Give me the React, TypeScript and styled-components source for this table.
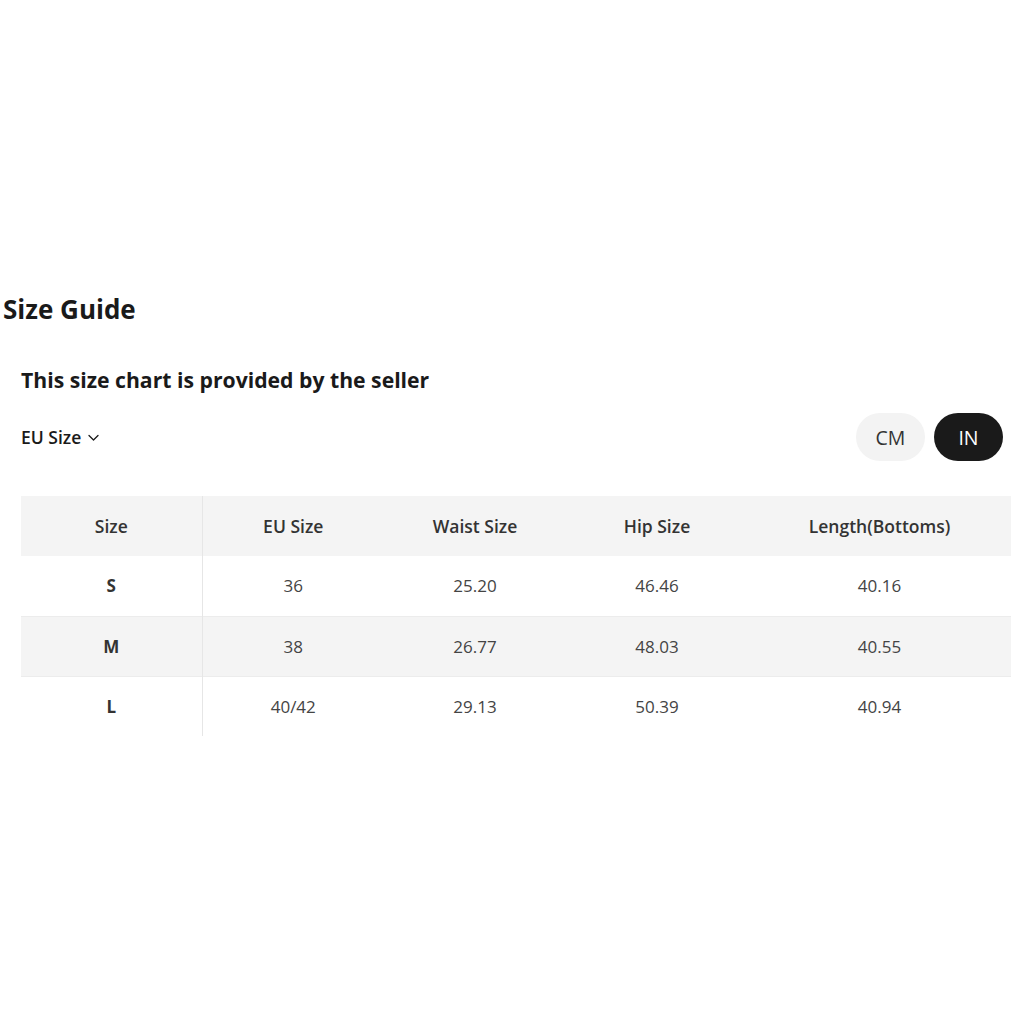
import styled, { createGlobalStyle } from "styled-components";

const GlobalStyle = createGlobalStyle`
  html, body {
    margin: 0;
    padding: 0;
    background: #ffffff;
    font-family: "Open Sans", "Noto Sans", sans-serif;
    color: #222;
  }
`;

const Page = styled.main`
  width: 1025px;
  height: 1025px;
  box-sizing: border-box;
  padding: 291px 14px 0 3px;
`;

const Title = styled.h1`
  margin: 0;
  font-size: 26px;
  line-height: 36px;
  font-weight: 700;
  color: #1a1a1a;
`;

const Body = styled.section`
  padding: 38px 0 0 18px;
`;

const Subtitle = styled.h2`
  margin: 0;
  font-size: 21.2px;
  line-height: 29px;
  font-weight: 700;
  color: #1a1a1a;
`;

const Toolbar = styled.div`
  display: flex;
  align-items: center;
  justify-content: space-between;
  margin-top: 19px;
  padding-right: 8px;
`;

const Dropdown = styled.button`
  display: flex;
  align-items: center;
  gap: 6px;
  border: none;
  background: none;
  padding: 0;
  font-family: inherit;
  font-size: 17.5px;
  font-weight: 600;
  color: #1a1a1a;
  cursor: pointer;
`;

const Units = styled.div`
  display: flex;
  gap: 9px;
`;

const Unit = styled.button<{ $active?: boolean }>`
  width: 69px;
  height: 48px;
  border: none;
  border-radius: 24px;
  font-family: inherit;
  font-size: 19.5px;
  font-weight: 400;
  background: ${(p) => (p.$active ? "#1a1a1a" : "#f3f3f3")};
  color: ${(p) => (p.$active ? "#ffffff" : "#333333")};
  cursor: pointer;
`;

const Table = styled.table`
  margin-top: 35px;
  width: 990px;
  border-collapse: collapse;
  table-layout: fixed;
  font-size: 17px;
`;

const Row = styled.tr<{ $shaded?: boolean }>`
  height: 60px;
  background: ${(p) => (p.$shaded ? "#f4f4f4" : "#ffffff")};
  border-bottom: 1px solid #ececec;
  &:last-child {
    border-bottom: none;
  }
`;

const HeadCell = styled.th<{ $first?: boolean }>`
  padding: 0;
  text-align: center;
  font-size: 17.5px;
  font-weight: 600;
  color: #333;
  border-right: ${(p) => (p.$first ? "1px solid #e6e6e6" : "none")};
`;

const Cell = styled.td<{ $first?: boolean }>`
  padding: 0;
  text-align: center;
  font-weight: ${(p) => (p.$first ? 700 : 400)};
  color: ${(p) => (p.$first ? "#333" : "#444")};
  border-right: ${(p) => (p.$first ? "1px solid #e6e6e6" : "none")};
`;

const Chevron = () => (
  <svg width="13" height="13" viewBox="0 0 13 13" fill="none">
    <path d="M2 4.5 L6.5 9 L11 4.5" stroke="#1a1a1a" strokeWidth="1.3" strokeLinecap="round" strokeLinejoin="round" />
  </svg>
);

const columns = ["Size", "EU Size", "Waist Size", "Hip Size", "Length(Bottoms)"];
const widths = [181, 182, 182, 182, 263];

const rows = [
  ["S", "36", "25.20", "46.46", "40.16"],
  ["M", "38", "26.77", "48.03", "40.55"],
  ["L", "40/42", "29.13", "50.39", "40.94"],
];

export default function App() {
  return (
    <Page>
      <GlobalStyle />
      <Title>Size Guide</Title>
      <Body>
        <Subtitle>This size chart is provided by the seller</Subtitle>
        <Toolbar>
          <Dropdown>
            EU Size <Chevron />
          </Dropdown>
          <Units>
            <Unit>CM</Unit>
            <Unit $active>IN</Unit>
          </Units>
        </Toolbar>
        <Table>
          <colgroup>
            {widths.map((w, i) => (
              <col key={i} style={{ width: w }} />
            ))}
          </colgroup>
          <thead>
            <Row $shaded>
              {columns.map((c, i) => (
                <HeadCell key={c} $first={i === 0}>
                  {c}
                </HeadCell>
              ))}
            </Row>
          </thead>
          <tbody>
            {rows.map((r, ri) => (
              <Row key={r[0]} $shaded={ri % 2 === 1}>
                {r.map((v, i) => (
                  <Cell key={i} $first={i === 0}>
                    {v}
                  </Cell>
                ))}
              </Row>
            ))}
          </tbody>
        </Table>
      </Body>
    </Page>
  );
}
